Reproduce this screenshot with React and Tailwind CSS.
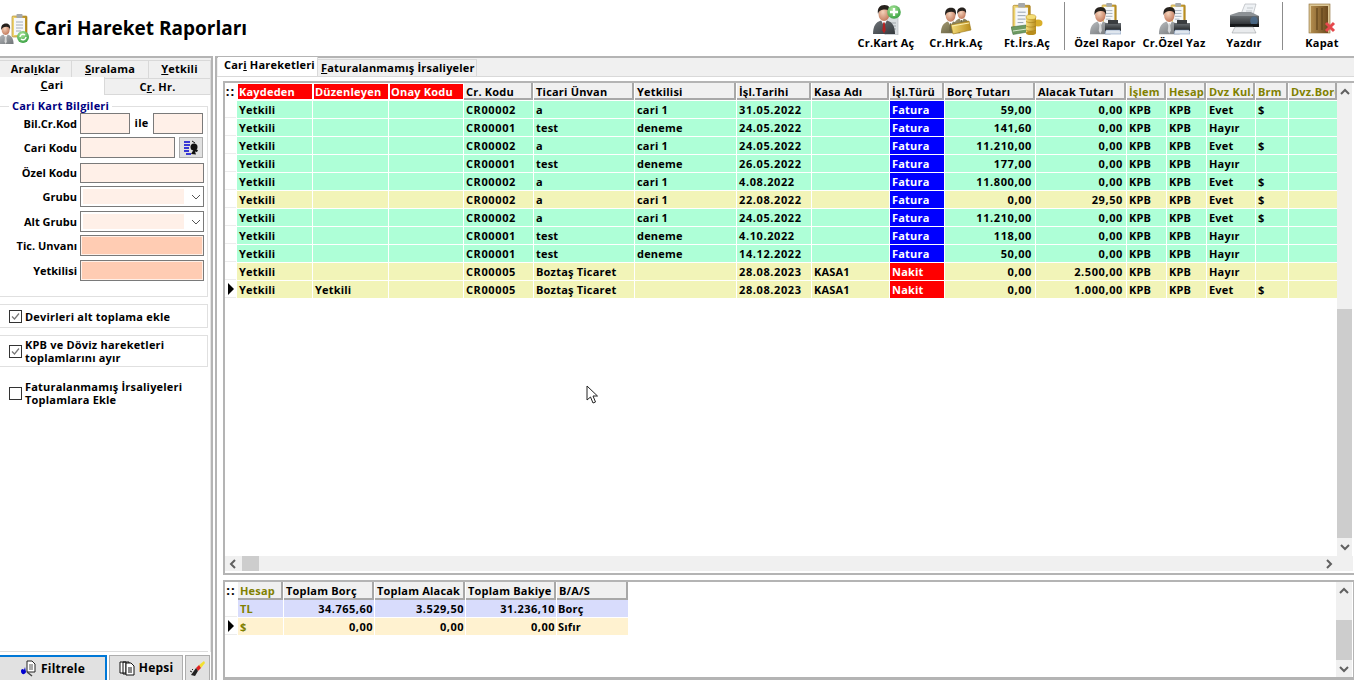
const FONT = "font-['Open_Sans','Noto_Sans',sans-serif]";

const columns = [
  { label: 'Kaydeden', w: 'w-[75px]', head: 'red' },
  { label: 'Düzenleyen', w: 'w-[75px]', head: 'red' },
  { label: 'Onay Kodu', w: 'w-[74px]', head: 'red' },
  { label: 'Cr. Kodu', w: 'w-[69px]', digits: true },
  { label: 'Ticari Ünvan', w: 'w-[100px]' },
  { label: 'Yetkilisi', w: 'w-[101px]' },
  { label: 'İşl.Tarihi', w: 'w-[74px]', digits: true },
  { label: 'Kasa Adı', w: 'w-[77px]' },
  { label: 'İşl.Türü', w: 'w-[54px]' },
  { label: 'Borç Tutarı', w: 'w-[90px]', right: true, digits: true },
  { label: 'Alacak Tutarı', w: 'w-[90px]', right: true, digits: true },
  { label: 'İşlem', w: 'w-[39px]', head: 'olive' },
  { label: 'Hesap', w: 'w-[39px]', head: 'olive' },
  { label: 'Dvz Kul.', w: 'w-[48px]', head: 'olive' },
  { label: 'Brm', w: 'w-[32px]', head: 'olive' },
  { label: 'Dvz.Borç', w: 'w-[48px]', head: 'olive' },
];

const rows = [
  ['Yetkili', '', '', 'CR00002', 'a', 'cari 1', '31.05.2022', '', 'Fatura', '59,00', '0,00', 'KPB', 'KPB', 'Evet', '$', ''],
  ['Yetkili', '', '', 'CR00001', 'test', 'deneme', '24.05.2022', '', 'Fatura', '141,60', '0,00', 'KPB', 'KPB', 'Hayır', '', ''],
  ['Yetkili', '', '', 'CR00002', 'a', 'cari 1', '24.05.2022', '', 'Fatura', '11.210,00', '0,00', 'KPB', 'KPB', 'Evet', '$', ''],
  ['Yetkili', '', '', 'CR00001', 'test', 'deneme', '26.05.2022', '', 'Fatura', '177,00', '0,00', 'KPB', 'KPB', 'Hayır', '', ''],
  ['Yetkili', '', '', 'CR00002', 'a', 'cari 1', '4.08.2022', '', 'Fatura', '11.800,00', '0,00', 'KPB', 'KPB', 'Evet', '$', ''],
  ['Yetkili', '', '', 'CR00002', 'a', 'cari 1', '22.08.2022', '', 'Fatura', '0,00', '29,50', 'KPB', 'KPB', 'Evet', '$', ''],
  ['Yetkili', '', '', 'CR00002', 'a', 'cari 1', '24.05.2022', '', 'Fatura', '11.210,00', '0,00', 'KPB', 'KPB', 'Evet', '$', ''],
  ['Yetkili', '', '', 'CR00001', 'test', 'deneme', '4.10.2022', '', 'Fatura', '118,00', '0,00', 'KPB', 'KPB', 'Hayır', '', ''],
  ['Yetkili', '', '', 'CR00001', 'test', 'deneme', '14.12.2022', '', 'Fatura', '50,00', '0,00', 'KPB', 'KPB', 'Hayır', '', ''],
  ['Yetkili', '', '', 'CR00005', 'Boztaş Ticaret', '', '28.08.2023', 'KASA1', 'Nakit', '0,00', '2.500,00', 'KPB', 'KPB', 'Hayır', '', ''],
  ['Yetkili', 'Yetkili', '', 'CR00005', 'Boztaş Ticaret', '', '28.08.2023', 'KASA1', 'Nakit', '0,00', '1.000,00', 'KPB', 'KPB', 'Evet', '$', ''],
];

const yellowRows = [5, 9, 10];

// shared gradients for the toolbar icons
function IconDefs() {
  return (
    <svg className="absolute w-0 h-0">
      <defs>
        <linearGradient id="suitGray" x1="0" y1="0" x2="1" y2="1">
          <stop offset="0" stopColor="#b9bcbf" />
          <stop offset="1" stopColor="#6f7376" />
        </linearGradient>
        <linearGradient id="suitDark" x1="0" y1="0" x2="1" y2="1">
          <stop offset="0" stopColor="#70757a" />
          <stop offset="1" stopColor="#33373b" />
        </linearGradient>
        <linearGradient id="suitOlive" x1="0" y1="0" x2="1" y2="1">
          <stop offset="0" stopColor="#a39a72" />
          <stop offset="1" stopColor="#5f5a3c" />
        </linearGradient>
        <radialGradient id="skin" cx=".4" cy=".35" r=".8">
          <stop offset="0" stopColor="#f6d3bb" />
          <stop offset="1" stopColor="#b8694a" />
        </radialGradient>
        <radialGradient id="greenBall" cx=".4" cy=".3" r=".8">
          <stop offset="0" stopColor="#a9e59a" />
          <stop offset="1" stopColor="#2f9a3a" />
        </radialGradient>
        <linearGradient id="gold" x1="0" y1="0" x2="1" y2="0">
          <stop offset="0" stopColor="#f4dc7a" />
          <stop offset="1" stopColor="#b98d1c" />
        </linearGradient>
        <linearGradient id="door" x1="0" y1="0" x2="1" y2="0">
          <stop offset="0" stopColor="#b08a4c" />
          <stop offset="1" stopColor="#6c4a1e" />
        </linearGradient>
        <linearGradient id="printer" x1="0" y1="0" x2="0" y2="1">
          <stop offset="0" stopColor="#6d7276" />
          <stop offset="1" stopColor="#1d2023" />
        </linearGradient>
      </defs>
    </svg>
  );
}

function Person({ suit = 'suitGray', tie = '#d8d8d8', x = 0, y = 0, s = 1 }) {
  return (
    <g transform={`translate(${x} ${y}) scale(${s})`}>
      <path d="M1 31c0-8 3-12 8-13.500h6c5 1.500 8 5.500 8 13.500z" fill={`url(#${suit})`} />
      <path d="M9 17l3 6 3-6z" fill="#fff" />
      <path d="M11.200 19.500h1.600l.8 8-1.600 3-1.600-3z" fill={tie} />
      <ellipse cx="12" cy="11" rx="5.500" ry="7" fill="url(#skin)" />
      <path d="M6 11c-1-6 2-9 6.500-9s6.500 3 5.500 9c-.5-3-2-4.500-5-4.500-3.500 0-6 1-7 4.500z" fill="#26211d" />
    </g>
  );
}

function Board({ x = 0, y = 0, s = 1 }) {
  return (
    <g transform={`translate(${x} ${y}) scale(${s})`}>
      <rect x="0" y="2" width="15" height="21" rx="1" fill="url(#gold)" stroke="#a67c1e" strokeWidth=".6" />
      <rect x="2" y="4" width="11" height="17" fill="#f5f7f9" />
      <path d="M4 8h7M4 11h7M4 14h7M4 17h5" stroke="#8f9cab" strokeWidth=".8" />
      <rect x="4.500" y="0" width="6" height="4" rx=".8" fill="#a5a8aa" />
    </g>
  );
}

function ToolIcon({ type }) {
  return (
    <svg width="32" height="32" viewBox="0 0 32 32">
      {type === 'kart' && (
        <>
          <rect x="15" y="9" width="13" height="23" fill="#d9dde0" stroke="#aeb3b7" strokeWidth=".6" />
          <path d="M18 20h8M18 23h8M18 26h8" stroke="#9ea4a9" />
          <Person suit="suitDark" tie="#b32222" x={2} y={0} s={1} />
          <circle cx="24" cy="9" r="6.800" fill="url(#greenBall)" />
          <path d="M24 5v8M20 9h8" stroke="#fff" strokeWidth="2.300" />
        </>
      )}
      {type === 'hrk' && (
        <>
          <Person suit="suitOlive" tie="#6e6a48" x={13} y={3} s={.72} />
          <Person suit="suitOlive" tie="#6e6a48" x={0} y={3} s={.88} />
          <path d="M11 22l18-4 2 9-18 4z" fill="url(#gold)" stroke="#9d7a1c" strokeWidth=".6" />
          <path d="M12 23l17-3" stroke="#fbeeb0" />
        </>
      )}
      {type === 'irs' && (
        <>
          <Board x={2} y={0} s={1.150} />
          <path d="M0 24l15-2 2 7-15 2.500z" fill="#6e9a62" stroke="#3f6a3b" strokeWidth=".5" />
          <path d="M2 28l14-2" stroke="#d7e8cf" strokeWidth="1" />
          <ellipse cx="27" cy="20" rx="4.500" ry="3.500" fill="#d9ae2a" />
          <rect x="15" y="14" width="10" height="16" fill="url(#gold)" />
          <ellipse cx="20" cy="14" rx="5" ry="2.500" fill="#f4dd75" stroke="#b98d1c" strokeWidth=".5" />
          <ellipse cx="20" cy="30" rx="5" ry="2" fill="#b98d1c" />
          <path d="M15 18.500c2 1.500 8 1.500 10 0M15 23c2 1.500 8 1.500 10 0M15 27c2 1.500 8 1.500 10 0" fill="none" stroke="#a27c18" strokeWidth=".6" />
        </>
      )}
      {type === 'ozel' && (
        <>
          <Board x={13} y={0} s={.95} />
          <Person suit="suitGray" tie="#d4d6d8" x={0} y={2} s={.94} />
          <rect x="16" y="20" width="16" height="8" fill="url(#printer)" />
          <rect x="19" y="17" width="10" height="4" fill="#3a3d40" />
          <path d="M17 27h14l1 4H16z" fill="#dfe6ee" stroke="#6f8bb0" strokeWidth=".5" />
        </>
      )}
      {type === 'print' && (
        <>
          <path d="M13 11l4-10h11l-3 11z" fill="#eef1f4" stroke="#a9adb1" strokeWidth=".6" />
          <path d="M19 5h6M18 8h6" stroke="#c3c8cc" />
          <path d="M2 12h18l11 1v11H2z" fill="url(#printer)" />
          <path d="M2 12l9-3h12l8 4H2z" fill="#8c9195" />
          <ellipse cx="26" cy="18" rx="3.800" ry="4.500" fill="#4c6f92" opacity=".8" />
          <rect x="2" y="21" width="29" height="3" fill="#16181a" />
          <path d="M7 24h18l3 6H4z" fill="#e9ebed" stroke="#8d9195" strokeWidth=".5" />
        </>
      )}
      {type === 'door' && (
        <>
          <rect x="3" y="1" width="21" height="29" fill="#dcc795" stroke="#8a6a34" strokeWidth=".6" />
          <rect x="5" y="3" width="17" height="27" fill="url(#door)" />
          <path d="M11 5v22M16 5v22" stroke="#5f431b" strokeWidth="1.200" />
          <path d="M20 20l8 8M28 20l-8 8" stroke="#e5484c" strokeWidth="3" />
        </>
      )}
    </svg>
  );
}

function ToolButton({ label, type, w }) {
  return (
    <div className={`flex flex-col items-center ${w}`}>
      <div className="h-[32px] flex items-center"><ToolIcon type={type} /></div>
      <span className="text-[11px] font-bold leading-[15px] whitespace-nowrap text-black">{label}</span>
    </div>
  );
}

function Sep() {
  return <div className="w-px h-[48px] bg-[#8c8c8c] shrink-0 -mt-[1px]" />;
}

function Input({ className = 'bg-[#fff0e8]', w, h = 'h-[21px]' }) {
  return <div className={`${h} border border-[#7a7a7a] ${w} ${className}`} />;
}

function FieldRow({ label, gap, h = 'h-[21px]', children }) {
  return (
    <div className={`flex items-center ${h} ${gap}`}>
      <span className="w-[78px] pt-[1px] text-right text-[11px] font-bold pr-[1px] whitespace-nowrap tracking-normal">{label}</span>
      <div className="ml-[2px] flex items-center">{children}</div>
    </div>
  );
}

function Combo() {
  return (
    <div className="h-[21px] w-[124px] border border-[#7a7a7a] bg-white flex items-center pl-[2px]">
      <div className="h-[15px] w-[101px] bg-[#fff0e8]" />
      <svg className="ml-[7px]" width="10" height="6" viewBox="0 0 10 6">
        <path d="M1 1l4 4 4-4" fill="none" stroke="#555" />
      </svg>
    </div>
  );
}

function CheckRow({ checked, boxed, h, children }) {
  return (
    <div className={`flex items-center pl-[9px] ${h} ${boxed ? 'border border-l-0 border-[#e0e0e0]' : ''}`}>
      <div className="w-[13px] h-[13px] border border-[#333] bg-white flex items-center justify-center shrink-0">
        {checked && (
          <svg width="11" height="11" viewBox="0 0 11 11">
            <path d="M2 5.500l2.500 2.500L9 2.500" fill="none" stroke="#777" strokeWidth="1.200" />
          </svg>
        )}
      </div>
      <span className="ml-[3px] text-[11px] font-bold leading-[13px]">{children}</span>
    </div>
  );
}

function Sidebar() {
  return (
    <aside className="w-[213px] h-full shrink-0 flex flex-col border-t-2 border-r-2 border-[#b4b4b4] bg-white">
      <div className="bg-[#f0f0f0] pt-[2px] text-[11px] font-bold">
        <div className="flex h-[18px] leading-[16px] text-center">
          <div className="w-[72px] border-t border-r border-[#d9d9d9]">Aral<u>ı</u>klar</div>
          <div className="w-[77px] border-t border-r border-[#d9d9d9]"><u>S</u>ıralama</div>
          <div className="flex-1 border-t border-r border-[#d9d9d9]"><u>Y</u>etkili</div>
        </div>
        <div className="flex h-[17px] leading-[16px] text-center">
          <div className="w-[105px] h-[18px] bg-white border-r border-[#d9d9d9] -mt-[1px]"><u>C</u>ari</div>
          <div className="flex-1 border-t border-b border-r border-[#d9d9d9]">C<u>r</u>. Hr.</div>
        </div>
      </div>
      <div className="flex-1 flex flex-col border-r border-[#e4e4e4] pr-[2px] min-h-0">
        <div className="relative mt-[11px] h-[191px] border border-l-0 border-[#e0e0e0] pt-[6px]">
          <span className="absolute -top-[8px] left-[9px] bg-white px-[3px] text-[11px] font-bold leading-[13px] text-[#000080]">Cari Kart Bilgileri</span>
          <FieldRow label="Bil.Cr.Kod" gap="mb-[3px]">
            <Input w="w-[50px]" />
            <span className="w-[23px] text-center text-[11px] font-bold">ile</span>
            <Input w="w-[50px]" />
          </FieldRow>
          <FieldRow label="Cari Kodu" gap="mb-[5px]">
            <Input w="w-[95px]" />
            <div className="ml-[4px] w-[24px] h-[21px] bg-[#e1e1e1] border border-[#adadad] flex items-center justify-center">
              <svg width="17" height="17" viewBox="0 0 17 17">
                <path d="M1 3h6M1 6h6M1 9h5M1 12h5M3 15h5" stroke="#0000d0" strokeWidth="1.400" />
                <path d="M9 2l3 2" stroke="#111" />
                <circle cx="11" cy="8" r="3.500" fill="#111" />
                <path d="M8 15l3-5 4 1-1 2-2-.5 1 3z" fill="#111" />
              </svg>
            </div>
          </FieldRow>
          <FieldRow label="Özel Kodu" gap="mb-[3px]" h="h-[20px]"><Input w="w-[124px]" h="h-[20px]" /></FieldRow>
          <FieldRow label="Grubu" gap="mb-[4px]"><Combo /></FieldRow>
          <FieldRow label="Alt Grubu" gap="mb-[3px]"><Combo /></FieldRow>
          <FieldRow label="Tic. Unvanı" gap="mb-[4px]">
            <div className="h-[21px] w-[124px] border border-[#7a7a7a] bg-[#ffccb3] outline outline-1 -outline-offset-2 outline-[#fff0e8]" />
          </FieldRow>
          <FieldRow label="Yetkilisi">
            <div className="h-[21px] w-[124px] border border-[#7a7a7a] bg-[#ffccb3] outline outline-1 -outline-offset-2 outline-[#fff0e8]" />
          </FieldRow>
        </div>
        <div className="mt-[7px]"><CheckRow checked boxed h="h-[24px]">Devirleri alt toplama ekle</CheckRow></div>
        <div className="mt-[7px]">
          <CheckRow checked boxed h="h-[32px]">KPB ve Döviz hareketleri<br />toplamlarını ayır</CheckRow>
        </div>
        <div className="mt-[10px]">
          <CheckRow h="h-[32px]">Faturalanmamış İrsaliyeleri<br />Toplamlara Ekle</CheckRow>
        </div>
        <div className="flex-1" />
        <div className="border-t border-[#dcdcdc] h-[1px]" />
      </div>
      <div className="flex h-[25px] mt-[3px] text-[12px] font-bold gap-[2px] pr-[1px]">
        <div className="w-[107px] bg-[#e1e1e1] border-2 border-l-0 border-b-0 border-[#0078d7] flex items-center justify-center gap-[4px]">
          <svg width="17" height="17" viewBox="0 0 17 17">
            <path d="M7 1h5l3 3v8H7z" fill="#fff" stroke="#222" />
            <path d="M9 5h4M9 7h4M9 9h4" stroke="#555" />
            <path d="M1 11c0-2 2-3 3-1l1-3 1 5c-1 3-5 3-5-1z" fill="#0000d0" />
            <path d="M7 12l5 4" stroke="#444" strokeWidth="1.500" />
          </svg>
          Filtrele
        </div>
        <div className="w-[74px] bg-[#e1e1e1] border border-b-0 border-[#adadad] flex items-center justify-center gap-[4px]">
          <svg width="16" height="16" viewBox="0 0 16 16">
            <path d="M1 2h6v11H1zM4 2h6v12H4z" fill="#fff" stroke="#111" />
            <path d="M7 3h5l3 3v9H7z" fill="#fff" stroke="#111" />
            <path d="M9 8h4M9 10h4M9 12h4" stroke="#111" />
          </svg>
          Hepsi
        </div>
        <div className="flex-1 bg-[#e1e1e1] border border-b-0 border-[#adadad] flex items-center justify-center">
          <svg width="17" height="17" viewBox="0 0 17 17">
            <path d="M10 5l5-4 1 2-4 5z" fill="#f3e030" />
            <path d="M7 8l3-3 2 3-3 3z" fill="#e02020" />
            <path d="M2 15l5-7 2 3-3 5z" fill="#222" />
            <path d="M1 11l2 1M3 9l1 1" stroke="#222" />
          </svg>
        </div>
      </div>
    </aside>
  );
}

function HeadCell({ w, color, h = 'h-[17px]', children }) {
  const tone = color === 'red'
    ? 'bg-[#ff0000] text-white border border-r-0 border-white pl-[1px] leading-[16px]'
    : color === 'olive'
      ? 'bg-[#f0f0f0] text-[#808000] border-r-2 border-b-2 border-[#a8a8a8] pl-[2px] leading-[18px]'
      : 'bg-[#f0f0f0] text-black border-r-2 border-b-2 border-[#a8a8a8] pl-[2px] leading-[18px]';
  return (
    <div className={`${w} shrink-0 ${h} overflow-hidden whitespace-nowrap mr-px ${tone}`}>
      {children}
    </div>
  );
}

function Indicator({ active, w = 'w-[11px]' }) {
  return (
    <div className={`${w} shrink-0 h-[17px] mr-px bg-white border-b border-[#ececec] flex items-center justify-center`}>
      {active && <div className="w-0 h-0 border-y-[6px] border-y-transparent border-l-[6px] border-l-black" />}
    </div>
  );
}

function GripHead({ w }) {
  return <div className={`${w} mr-px shrink-0 text-center text-[13px] leading-[16px] tracking-[1px]`}>::</div>;
}

function MainGrid() {
  return (
    <div className="flex-1 min-h-0 ml-[6px] mt-[4px] border-t-2 border-b-2 border-l-2 border-[#b4b4b4] bg-white flex flex-col text-[11px] font-bold">
      <div className="flex-1 min-h-0 flex pr-[2px]">
        <div className="flex-1 min-w-0 overflow-hidden">
          <div className="flex h-[17px] mb-px">
            <GripHead w="w-[11px]" />
            {columns.map(c => (
              <HeadCell key={c.label} w={c.w} color={c.head}>{c.label}</HeadCell>
            ))}
          </div>
          {rows.map((row, i) => (
            <div key={i} className="flex h-[18px]">
              <Indicator active={i === rows.length - 1} />
              {row.map((val, j) => {
                const rowBg = yellowRows.includes(i) ? 'bg-[#f2f4b8]' : 'bg-[#aeffd7]';
                const isType = j === 8;
                const typeBg = val === 'Nakit' ? 'bg-[#ff0000] text-white' : 'bg-[#0000ff] text-white';
                return (
                  <div
                    key={j}
                    className={`${columns[j].w} shrink-0 mr-px h-[17px] leading-[17px] px-[2px] whitespace-nowrap overflow-hidden ${isType ? typeBg : rowBg} ${columns[j].right ? 'text-right pr-[3px]' : ''} ${columns[j].digits ? 'tracking-[0.6px]' : ''}`}
                  >
                    {val}
                  </div>
                );
              })}
            </div>
          ))}
        </div>
        <div className="w-[15px] shrink-0 bg-[#f0f0f0] flex flex-col items-center pt-[5px]">
          <svg width="10" height="8" viewBox="0 0 10 8"><path d="M1 6l4-4 4 4" fill="none" stroke="#606060" strokeWidth="2" /></svg>
          <div className="flex-1" />
          <div className="w-full h-[229px] bg-[#cdcdcd]" />
          <div className="h-[18px] flex items-center">
            <svg width="10" height="8" viewBox="0 0 10 8"><path d="M1 2l4 4 4-4" fill="none" stroke="#606060" strokeWidth="2" /></svg>
          </div>
        </div>
      </div>
      <div className="h-[15px] shrink-0 mb-[2px] mr-px bg-[#f0f0f0] flex items-center justify-between pl-[4px] pr-[20px]">
        <div className="flex items-center">
          <svg width="8" height="10" viewBox="0 0 8 10"><path d="M6 1L2 5l4 4" fill="none" stroke="#606060" strokeWidth="2" /></svg>
          <div className="w-[17px] h-[15px] ml-[5px] bg-[#cdcdcd]" />
        </div>
        <svg width="8" height="10" viewBox="0 0 8 10"><path d="M2 1l4 4-4 4" fill="none" stroke="#606060" strokeWidth="2" /></svg>
      </div>
    </div>
  );
}

function SummaryGrid() {
  const cols = [
    { label: 'Hesap', w: 'w-[45px]', color: 'olive' },
    { label: 'Toplam Borç', w: 'w-[90px]' },
    { label: 'Toplam Alacak', w: 'w-[90px]' },
    { label: 'Toplam Bakiye', w: 'w-[90px]' },
    { label: 'B/A/S', w: 'w-[71px]' },
  ];
  const data = [
    { bg: 'bg-[#d8dcfc]', vals: ['TL', '34.765,60', '3.529,50', '31.236,10', 'Borç'] },
    { bg: 'bg-[#fff2d0]', vals: ['$', '0,00', '0,00', '0,00', 'Sıfır'] },
  ];
  return (
    <div className="h-[100px] shrink-0 ml-[6px] mt-[5px] border-t-2 border-l-2 border-r border-b-[3px] border-[#b4b4b4] bg-white flex text-[11px] font-bold">
      <div className="flex-1">
        <div className="flex h-[18px]">
          <GripHead w="w-[12px]" />
          {cols.map(c => (
            <HeadCell key={c.label} w={c.w} color={c.color} h="h-[18px]">{c.label}</HeadCell>
          ))}
        </div>
        {data.map((r, i) => (
          <div key={i} className="flex h-[18px]">
            <Indicator active={i === 1} w="w-[12px]" />
            {r.vals.map((v, j) => (
              <div
                key={j}
                className={`${cols[j].w} mr-px h-[17px] leading-[17px] px-[1px] whitespace-nowrap ${r.bg} ${j === 0 ? 'text-[#808000] pl-[2px]' : ''} ${j > 0 && j < 4 ? 'text-right tracking-[0.5px]' : ''}`}
              >
                {v}
              </div>
            ))}
          </div>
        ))}
      </div>
      <div className="w-[16px] mr-px bg-[#f0f0f0] flex flex-col items-center pt-[5px]">
        <svg width="10" height="8" viewBox="0 0 10 8"><path d="M1 6l4-4 4 4" fill="none" stroke="#606060" strokeWidth="2" /></svg>
        <div className="flex-1" />
        <div className="w-full h-[40px] bg-[#cdcdcd]" />
        <div className="h-[17px] flex items-center">
          <svg width="10" height="8" viewBox="0 0 10 8"><path d="M1 2l4 4 4-4" fill="none" stroke="#606060" strokeWidth="2" /></svg>
        </div>
      </div>
    </div>
  );
}

export default function App() {
  return (
    <div className={`${FONT} relative w-[1354px] h-[680px] overflow-hidden bg-white text-black flex flex-col tracking-[0.2px]`}>
      <IconDefs />
      <header className="h-[56px] shrink-0 flex justify-between">
        <div className="flex items-center">
          <svg width="31" height="30" viewBox="0 0 31 30" className="mt-[2px]">
            <Board x={12} y={0} s={1} />
            <Person suit="suitGray" x={-3} y={8} s={.72} />
            <circle cx="23" cy="23" r="6" fill="url(#greenBall)" />
            <path d="M20 23a3 3 0 0 1 5-2M26 23a3 3 0 0 1-5 2" fill="none" stroke="#fff" strokeWidth="1.400" />
          </svg>
          <h1 className="ml-[3px] text-[19px] font-bold leading-none tracking-normal">Cari Hareket Raporları</h1>
        </div>
        <div className="flex items-start pr-[7px] pt-[3px]">
          <ToolButton label="Cr.Kart Aç" type="kart" w="w-[70px]" />
          <ToolButton label="Cr.Hrk.Aç" type="hrk" w="w-[70px]" />
          <ToolButton label="Ft.İrs.Aç" type="irs" w="w-[72px]" />
          <div className="w-[1px]" />
          <Sep />
          <div className="w-[5px]" />
          <ToolButton label="Özel Rapor" type="ozel" w="w-[70px]" />
          <ToolButton label="Cr.Özel Yaz" type="ozel" w="w-[68px]" />
          <ToolButton label="Yazdır" type="print" w="w-[72px]" />
          <div className="w-[2px]" />
          <Sep />
          <div className="w-[14px]" />
          <ToolButton label="Kapat" type="door" w="w-[50px]" />
        </div>
      </header>
      <div className="flex-1 min-h-0 flex bg-white">
        <Sidebar />
        <main className="ml-[2px] flex-1 min-w-0 flex flex-col border-t-2 border-l-2 border-[#b4b4b4] bg-white">
          <div className="h-[19px] shrink-0 flex items-end text-[11px] font-bold bg-[#f0f0f0] pl-[1px] border-b border-[#d9d9d9]">
            <div className="w-[100px] h-[19px] bg-white leading-[15px] pl-[6px] border-r border-[#d9d9d9]">Car<u>i</u> Hareketleri</div>
            <div className="h-[17px] w-[159px] leading-[15px] pl-[3px] border-t border-r border-[#d9d9d9]"><u>F</u>aturalanmamış İrsaliyeler</div>
          </div>
          <MainGrid />
          <SummaryGrid />
        </main>
      </div>
      {/* mouse pointer captured in the screenshot */}
      <svg className="absolute left-[586px] top-[385px]" width="13" height="19" viewBox="0 0 13 19">
        <path d="M1 1v14l3.500-3 2.500 6 2.500-1-2.500-6h4.500z" fill="#fff" stroke="#222" />
      </svg>
    </div>
  );
}
